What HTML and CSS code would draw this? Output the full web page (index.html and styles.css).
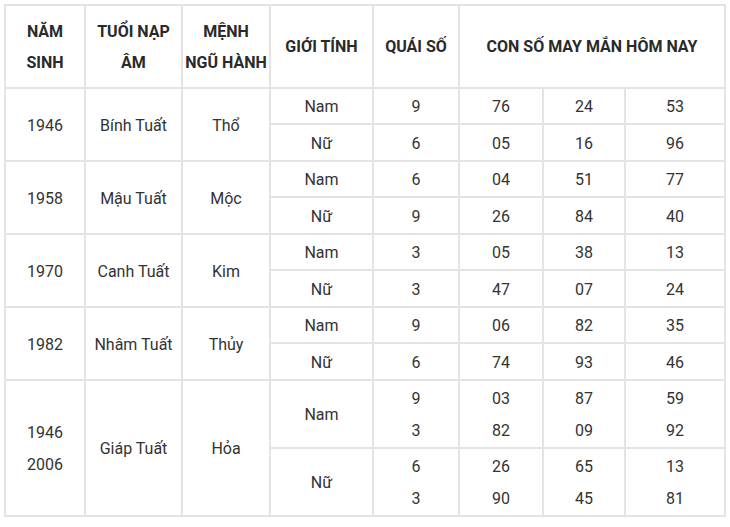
FILE: index.html
```html
<!DOCTYPE html>
<html lang="vi">
<head>
<meta charset="utf-8">
<link rel="stylesheet" href="styles.css">
</head>
<body>
<table class="lucky">
  <colgroup>
    <col class="c1"><col class="c2"><col class="c3"><col class="c4"><col class="c5"><col class="c6"><col class="c7"><col class="c8">
  </colgroup>
  <thead>
    <tr class="head">
      <th>NĂM<br>SINH</th>
      <th>TUỔI NẠP<br>ÂM</th>
      <th>MỆNH<br>NGŨ HÀNH</th>
      <th>GIỚI TÍNH</th>
      <th>QUÁI SỐ</th>
      <th colspan="3">CON SỐ MAY MẮN HÔM NAY</th>
    </tr>
  </thead>
  <tbody>
    <tr class="r-a"><td rowspan="2">1946</td><td rowspan="2">Bính Tuất</td><td rowspan="2">Thổ</td><td>Nam</td><td>9</td><td>76</td><td>24</td><td>53</td></tr>
    <tr class="r-b"><td>Nữ</td><td>6</td><td>05</td><td>16</td><td>96</td></tr>
    <tr class="r-a"><td rowspan="2">1958</td><td rowspan="2">Mậu Tuất</td><td rowspan="2">Mộc</td><td>Nam</td><td>6</td><td>04</td><td>51</td><td>77</td></tr>
    <tr class="r-b"><td>Nữ</td><td>9</td><td>26</td><td>84</td><td>40</td></tr>
    <tr class="r-a"><td rowspan="2">1970</td><td rowspan="2">Canh Tuất</td><td rowspan="2">Kim</td><td>Nam</td><td>3</td><td>05</td><td>38</td><td>13</td></tr>
    <tr class="r-b"><td>Nữ</td><td>3</td><td>47</td><td>07</td><td>24</td></tr>
    <tr class="r-a"><td rowspan="2">1982</td><td rowspan="2">Nhâm Tuất</td><td rowspan="2">Thủy</td><td>Nam</td><td>9</td><td>06</td><td>82</td><td>35</td></tr>
    <tr class="r-b"><td>Nữ</td><td>6</td><td>74</td><td>93</td><td>46</td></tr>
    <tr class="r-c"><td rowspan="2" class="tall">1946<br>2006</td><td rowspan="2">Giáp Tuất</td><td rowspan="2">Hỏa</td><td>Nam</td><td class="tall">9<br>3</td><td class="tall">03<br>82</td><td class="tall">87<br>09</td><td class="tall">59<br>92</td></tr>
    <tr class="r-c"><td>Nữ</td><td class="tall">6<br>3</td><td class="tall">26<br>90</td><td class="tall">65<br>45</td><td class="tall">13<br>81</td></tr>
  </tbody>
</table>
</body>
</html>
```

FILE: styles.css
```css
html, body {
  margin: 0;
  padding: 0;
  background: #ffffff;
}

body {
  padding: 4px 0 0 4px;
  font-family: Roboto, "Noto Sans", Arial, sans-serif;
  color: #333333;
}

.lucky {
  border-collapse: collapse;
  table-layout: fixed;
  width: 720px;
  font-size: 16px;
}

.c1 { width: 80px; }
.c2 { width: 97px; }
.c3 { width: 88px; }
.c4 { width: 103px; }
.c5 { width: 86px; }
.c6 { width: 84px; }
.c7 { width: 82px; }
.c8 { width: 100px; }

.lucky th,
.lucky td {
  border: 2px solid #e4e4e4;
  text-align: center;
  vertical-align: middle;
  padding: 2px 2px 0;
  line-height: 20px;
}

.lucky th {
  font-weight: 700;
  line-height: 31px;
  color: #2a2a2a;
  padding-top: 0;
}

.head { height: 83px; }
.r-a { height: 36px; }
.r-b { height: 37px; }
.r-c { height: 68px; }

.lucky td.tall {
  line-height: 32px;
  padding-top: 1px;
}
```
